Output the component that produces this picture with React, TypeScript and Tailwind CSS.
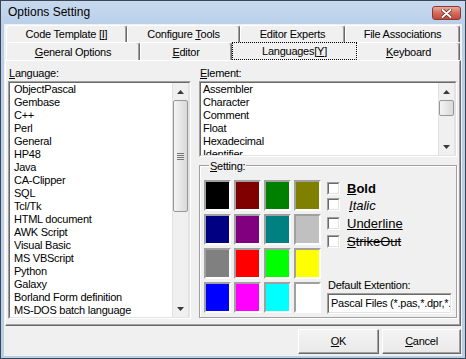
import React from "react";

const languages = [
  "ObjectPascal",
  "Gembase",
  "C++",
  "Perl",
  "General",
  "HP48",
  "Java",
  "CA-Clipper",
  "SQL",
  "Tcl/Tk",
  "HTML document",
  "AWK Script",
  "Visual Basic",
  "MS VBScript",
  "Python",
  "Galaxy",
  "Borland Form definition",
  "MS-DOS batch language",
  "x86 assembler",
];

const elements = [
  "Assembler",
  "Character",
  "Comment",
  "Float",
  "Hexadecimal",
  "Identifier",
  "Number",
];

const swatches = [
  "bg-[#000000]",
  "bg-[#800000]",
  "bg-[#008000]",
  "bg-[#808000]",
  "bg-[#000080]",
  "bg-[#800080]",
  "bg-[#008080]",
  "bg-[#c0c0c0]",
  "bg-[#808080]",
  "bg-[#ff0000]",
  "bg-[#00ff00]",
  "bg-[#ffff00]",
  "bg-[#0000ff]",
  "bg-[#ff00ff]",
  "bg-[#00ffff]",
  "bg-[#ffffff]",
];

const Arrow = ({ down }: { down?: boolean }) => (
  <svg width="7" height="4" viewBox="0 0 7 4">
    <polygon points={down ? "0,0 7,0 3.5,4" : "3.5,0 7,4 0,4"} fill="#3a3a3a" />
  </svg>
);

const ScrollBar = ({ thumb, grip }: { thumb: string; grip?: boolean }) => (
  <div className="w-[17px] h-full flex flex-col bg-[#f0f0f0] shadow-[inset_1px_0_0_#e2e2e2,inset_-1px_0_0_#e2e2e2]">
    <div className="h-[17px] flex items-center justify-center">
      <Arrow />
    </div>
    <div className="flex-1 flex flex-col">
      <div
        className={`${thumb} mx-[1px] rounded-[2px] border border-[#979797] bg-gradient-to-r from-[#f4f4f4] to-[#d9d9d9] flex items-center justify-center`}
      >
        {grip && (
          <div className="flex flex-col gap-[1px]">
            <div className="w-[7px] h-[1px] bg-[#777]" />
            <div className="w-[7px] h-[1px] bg-[#777]" />
            <div className="w-[7px] h-[1px] bg-[#777]" />
            <div className="w-[7px] h-[1px] bg-[#777]" />
          </div>
        )}
      </div>
    </div>
    <div className="h-[17px] flex items-center justify-center">
      <Arrow down />
    </div>
  </div>
);

const ListBox = ({
  items,
  className,
  thumb,
  grip,
  pad,
}: {
  items: string[];
  className: string;
  thumb: string;
  grip?: boolean;
  pad: string;
}) => (
  <div
    className={`${className} border border-t-[#a0a0a0] border-l-[#a0a0a0] border-r-white border-b-white`}
  >
    <div className="h-full border border-t-[#696969] border-l-[#696969] border-r-[#e3e3e3] border-b-[#e3e3e3] bg-white flex">
      <div className={`flex-1 overflow-hidden ${pad}`}>
        {items.map((it) => (
          <div key={it} className="h-[13px] leading-[13px] whitespace-nowrap">
            {it}
          </div>
        ))}
      </div>
      <ScrollBar thumb={thumb} grip={grip} />
    </div>
  </div>
);

const Tab = ({
  className,
  children,
}: {
  className: string;
  children: React.ReactNode;
}) => (
  <div
    className={`${className} h-full flex items-center justify-center rounded-t-[3px] border-t border-l border-r border-t-white border-l-white border-r-[#696969] shadow-[inset_-1px_0_0_#a0a0a0]`}
  >
    <span className="whitespace-nowrap">{children}</span>
  </div>
);

const CheckBox = () => (
  <div className="w-[13px] h-[13px] border border-t-[#a0a0a0] border-l-[#a0a0a0] border-r-white border-b-white">
    <div className="h-full border border-t-[#696969] border-l-[#696969] border-r-[#e3e3e3] border-b-[#e3e3e3] bg-white" />
  </div>
);

const Btn = ({
  className,
  children,
}: {
  className: string;
  children: React.ReactNode;
}) => (
  <button
    type="button"
    className={`${className} h-[25px] flex items-center justify-center border border-t-white border-l-white border-r-[#696969] border-b-[#696969] shadow-[inset_-1px_-1px_0_#a0a0a0] bg-gradient-to-b from-[#f4f4f4] to-[#e9e9e9]`}
  >
    <span>{children}</span>
  </button>
);

export default function App() {
  return (
    <div className="w-[466px] h-[359px] border border-[#3d4652] bg-[#b9cfe8] flex flex-col overflow-hidden font-['Liberation_Sans',Arial,sans-serif] text-black">
      {/* title bar */}
      <div className="h-[23px] shrink-0 flex items-start justify-between bg-gradient-to-b from-[#c7d9ee] to-[#bad0e9]">
        <div className="pl-[7px] pt-[4px] text-[12px] leading-[14px]">
          Options Setting
        </div>
        <div className="mt-[5px] mr-[4px] w-[29px] h-[14px] rounded-[3px] border border-[#8b3a30] bg-gradient-to-b from-[#e8a89c] via-[#d46a5b] to-[#c4493a] flex items-center justify-center">
          <svg width="11" height="9" viewBox="0 0 11 9">
            <path d="M1.5 1 L9.5 8 M9.5 1 L1.5 8" stroke="#5a1d15" strokeWidth="3.4" strokeLinecap="round" />
            <path d="M1.5 1 L9.5 8 M9.5 1 L1.5 8" stroke="#fff" strokeWidth="2" strokeLinecap="round" />
          </svg>
        </div>
      </div>

      {/* client area */}
      <div className="flex-1 mx-[3px] mb-[2px] bg-[#f0f0f0] flex flex-col pt-[1px] text-[11px] tracking-[-0.25px]">
        {/* back tab row */}
        <div className="h-[17px] flex pl-[2px]">
          <Tab className="w-[121px]">
            Code Template [<u>I</u>]
          </Tab>
          <Tab className="w-[113px]">
            Configure <u>T</u>ools
          </Tab>
          <Tab className="w-[105px]">Editor Experts</Tab>
          <Tab className="w-[115px]">File Associations</Tab>
        </div>
        {/* front tab row */}
        <div className="h-[18px] flex pl-[2px]">
          <Tab className="w-[134px] pt-[2px]">
            <u>G</u>eneral Options
          </Tab>
          <Tab className="w-[92px] pt-[2px]">
            <u>E</u>ditor
          </Tab>
          <div className="w-[125px] h-full flex items-center justify-center pt-[1px] border border-dotted border-[#000]">
            <span>
              Languages[<u>Y</u>]
            </span>
          </div>
          <Tab className="w-[103px] pt-[2px]">
            <u>K</u>eyboard
          </Tab>
        </div>

        {/* page */}
        <div className="ml-[1px] w-[456px] h-[266px] border border-t-white border-l-white border-r-[#696969] border-b-[#696969] shadow-[inset_-1px_-1px_0_#a0a0a0] flex gap-[8px] pl-[2px] pt-[6px]">
          {/* languages */}
          <div className="w-[183px] flex flex-col">
            <div className="h-[14px] pl-[1px] leading-[12px]">
              <u>L</u>anguage:
            </div>
            <ListBox
              items={languages}
              className="w-[183px] h-[238px]"
              thumb="h-[112px]"
              grip
              pad="pl-[4px]"
            />
          </div>

          {/* right column */}
          <div className="w-[258px] flex flex-col">
            <div className="h-[14px] pl-[1px] leading-[12px]">
              <u>E</u>lement:
            </div>
            <ListBox
              items={elements}
              className="w-[258px] h-[76px]"
              thumb="h-[16px]"
              pad="pl-[2px]"
            />

            {/* setting group */}
            <div className="relative mt-[8px] w-[258px] h-[153px] border border-[#a0a0a0] shadow-[inset_1px_1px_0_#fff,1px_1px_0_#fff] flex pl-[4px] pt-[14px]">
              <div className="absolute left-[9px] -top-[5px] px-[1px] bg-[#f0f0f0] leading-[11px]">
                <u>S</u>etting:
              </div>
              <div className="grid grid-cols-[repeat(4,27px)] auto-rows-[31px] gap-[3px]">
                {swatches.map((c) => (
                  <div
                    key={c}
                    className="border-2 border-t-[#a0a0a0] border-l-[#a0a0a0] border-r-white border-b-white"
                  >
                    <div className={`h-full w-full ${c}`} />
                  </div>
                ))}
              </div>
              <div className="ml-[6px] w-[125px] flex flex-col">
                <div className="mt-[1px] flex flex-col text-[13px] tracking-normal">
                  <div className="h-[18px] flex items-start gap-[7px]">
                    <div className="mt-[1px]">
                      <CheckBox />
                    </div>
                    <span className="font-bold leading-[15px]">
                      <u>B</u>old
                    </span>
                  </div>
                  <div className="h-[18px] flex items-start gap-[7px]">
                    <div className="-mt-[1px]">
                      <CheckBox />
                    </div>
                    <span className="italic leading-[13px] ml-[2px]">
                      <u>I</u>talic
                    </span>
                  </div>
                  <div className="h-[18px] flex items-start gap-[7px]">
                    <CheckBox />
                    <span className="underline leading-[13px]">Underline</span>
                  </div>
                  <div className="h-[18px] flex items-start gap-[7px]">
                    <CheckBox />
                    <span className="line-through leading-[13px]">
                      <u>S</u>trikeOut
                    </span>
                  </div>
                </div>
                <div className="mt-auto h-[13px] pl-[1px] leading-[13px] whitespace-nowrap">
                  Default Extention:
                </div>
                <div className="mt-[1px] mb-[3px] w-[125px] h-[21px] border border-t-[#a0a0a0] border-l-[#a0a0a0] border-r-white border-b-white">
                  <div className="h-full border border-t-[#696969] border-l-[#696969] border-r-[#e3e3e3] border-b-[#e3e3e3] bg-white pl-[2px] leading-[17px] whitespace-nowrap overflow-hidden">
                    Pascal Files (*.pas,*.dpr,*.dpk,*.inc)
                  </div>
                </div>
              </div>
            </div>
          </div>
        </div>

        {/* buttons */}
        <div className="mt-[3px] flex justify-end gap-[3px] pr-[1px]">
          <Btn className="w-[81px]">
            <u>O</u>K
          </Btn>
          <Btn className="w-[79px]">
            <u>C</u>ancel
          </Btn>
        </div>
      </div>
    </div>
  );
}
